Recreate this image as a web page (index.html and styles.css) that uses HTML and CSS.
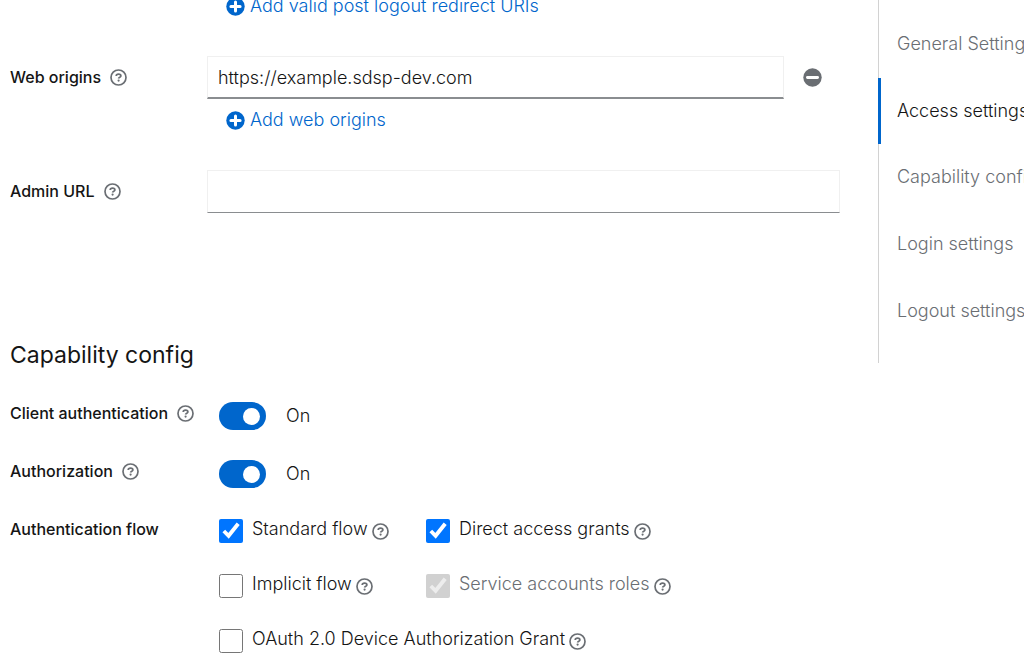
FILE: index.html
```
<!DOCTYPE html>
<html lang="en">
<head>
<meta charset="utf-8">
<title>Client settings</title>
<link rel="stylesheet" href="styles.css">
</head>
<body>
<svg class="sprite" aria-hidden="true">
  <symbol id="help" viewBox="0 0 17 17">
    <circle cx="8.5" cy="8.5" r="7.5" fill="none" stroke="currentColor" stroke-width="1.7"/>
    <path d="M6.2 6.9C6.2 5.7 7.2 5.1 8.6 5.1S10.9 5.8 10.9 6.9C10.9 8.2 8.6 8.2 8.6 9.6" fill="none" stroke="currentColor" stroke-width="1.7"/>
    <circle cx="8.6" cy="11.6" r="1.1" fill="currentColor"/>
  </symbol>
  <symbol id="plus" viewBox="0 0 19 19">
    <circle cx="9.5" cy="9.5" r="9.2" fill="currentColor"/>
    <path d="M9.5 4.9V14.1M4.9 9.5H14.1" stroke="#fff" stroke-width="3" stroke-linecap="round"/>
  </symbol>
  <symbol id="minus" viewBox="0 0 19 19">
    <circle cx="9.5" cy="9.5" r="9.2" fill="currentColor"/>
    <path d="M4.4 9.5H14.6" stroke="#fff" stroke-width="2.8" stroke-linecap="round"/>
  </symbol>
</svg>
<div class="page">
  <main class="form">
    <button class="add" type="button"><svg class="icon"><use href="#plus"/></svg>Add valid post logout redirect URIs</button>

    <div class="row row-text">
      <div class="label"><label for="origins">Web origins</label><button class="help" type="button" aria-label="Help"><svg><use href="#help"/></svg></button></div>
      <div class="multi">
        <input class="text active" id="origins" type="text" value="https://example.sdsp-dev.com">
        <button class="remove" type="button" aria-label="Remove"><svg class="icon"><use href="#minus"/></svg></button>
      </div>
    </div>
    <button class="add" type="button"><svg class="icon"><use href="#plus"/></svg>Add web origins</button>

    <div class="row row-text">
      <div class="label"><label for="admin">Admin URL</label><button class="help" type="button" aria-label="Help"><svg><use href="#help"/></svg></button></div>
      <input class="text" id="admin" type="text">
    </div>

    <h2 class="heading">Capability config</h2>

    <div class="row row-option">
      <div class="label"><label for="client-auth">Client authentication</label><button class="help" type="button" aria-label="Help"><svg><use href="#help"/></svg></button></div>
      <div class="toggle"><input class="switch" id="client-auth" type="checkbox" role="switch" checked><label for="client-auth">On</label></div>
    </div>
    <div class="row row-option">
      <div class="label"><label for="authz">Authorization</label><button class="help" type="button" aria-label="Help"><svg><use href="#help"/></svg></button></div>
      <div class="toggle"><input class="switch" id="authz" type="checkbox" role="switch" checked><label for="authz">On</label></div>
    </div>
    <div class="row row-option">
      <div class="label" id="flow-label">Authentication flow</div>
      <div class="flows" role="group" aria-labelledby="flow-label">
        <div class="check"><input class="box" id="standard" type="checkbox" checked><label for="standard">Standard flow</label><button class="help" type="button" aria-label="Help"><svg><use href="#help"/></svg></button></div>
        <div class="check"><input class="box" id="direct" type="checkbox" checked><label for="direct">Direct access grants</label><button class="help" type="button" aria-label="Help"><svg><use href="#help"/></svg></button></div>
        <div class="check"><input class="box" id="implicit" type="checkbox"><label for="implicit">Implicit flow</label><button class="help" type="button" aria-label="Help"><svg><use href="#help"/></svg></button></div>
        <div class="check"><input class="box" id="service" type="checkbox" checked disabled><label for="service">Service accounts roles</label><button class="help" type="button" aria-label="Help"><svg><use href="#help"/></svg></button></div>
        <div class="check wide"><input class="box" id="device" type="checkbox"><label for="device">OAuth 2.0 Device Authorization Grant</label><button class="help" type="button" aria-label="Help"><svg><use href="#help"/></svg></button></div>
      </div>
    </div>
  </main>
  <nav class="jump" aria-label="Jump to section">
    <a class="jump-link" href="#general">General Settings</a>
    <a class="jump-link current" href="#access">Access settings</a>
    <a class="jump-link" href="#capability">Capability config</a>
    <a class="jump-link" href="#login">Login settings</a>
    <a class="jump-link" href="#logout">Logout settings</a>
  </nav>
</div>
</body>
</html>
```
FILE: styles.css
```
* { box-sizing: border-box; }
body {
  margin: 0;
  background: #fff;
  color: #151515;
  font: 300 18px/28px Inter, "Open Sans", sans-serif;
  overflow-x: hidden;
}
button { padding: 0; border: 0; background: none; font: inherit; cursor: pointer; }
.sprite { position: absolute; width: 0; height: 0; }
.icon { display: block; width: 19px; height: 19px; }

.page { display: flex; align-items: flex-start; }
.form { flex: 1; min-width: 0; padding: 0 38px 0 10px; margin-top: -8px; }

.row { display: grid; grid-template-columns: 197px 1fr; }
.row-text { margin-top: 36px; }
.row-option { min-height: 58px; }
.label { display: flex; align-items: center; gap: 9px; height: 28px; color: #151515; font-size: 16px; font-weight: 500; white-space: nowrap; }
.row-text .label { margin-top: 7px; }
.help { color: #6a6e73; }
.help svg { display: block; width: 17px; height: 17px; }

.text {
  width: 100%;
  height: 43px;
  padding: 0 10px;
  border: 1px solid #f0f0f0;
  border-bottom-color: #8a8d90;
  background: #fff;
  color: #151515;
  font: inherit;
}
.text.active { border-bottom-width: 2px; }
.multi { display: flex; align-items: center; }
.remove { display: grid; flex: none; width: 56px; height: 43px; place-items: center; color: #6a6e73; }
.add { display: flex; align-items: center; gap: 5px; margin-left: 216px; color: #06c; white-space: nowrap; }
.row + .add { margin-top: 7px; }

.heading { margin: 125px 0 27px; font-size: 23px; font-weight: 400; line-height: 34px; }

.toggle { display: flex; align-items: center; gap: 20px; height: 28px; margin: 3px 0 0 12px; }
.switch {
  appearance: none;
  display: flex;
  align-items: center;
  justify-content: flex-end;
  width: 47px;
  height: 28px;
  margin: 0;
  padding-right: 6px;
  border-radius: 14px;
  background: #06c;
}
.switch::before { content: ""; width: 17px; height: 17px; border-radius: 50%; background: #fff; }

.flows { display: grid; grid-template-columns: 207px 1fr; grid-template-rows: 55px 55px auto; margin: 0 0 0 12px; }
.check { display: flex; align-items: flex-start; white-space: nowrap; }
.check.wide { grid-column: 1 / -1; }
.check label { margin: 0 4px 0 9px; }
.check .help { margin-top: 8px; }
.box { flex: none; width: 24px; height: 24px; margin: 4px 0 0; accent-color: #0075ff; }
.box:disabled + label { color: #6a6e73; }

.jump { display: grid; flex: none; width: 146px; grid-auto-rows: 1fr; height: 363px; padding: 11px 0 19px; border-left: 1px solid #d2d2d2; }
.jump-link { display: flex; align-items: center; padding-left: 18px; color: #6a6e73; text-decoration: none; white-space: nowrap; }
.jump-link.current { color: #151515; box-shadow: inset 2px 0 #06c, -1px 0 #06c; }
```
